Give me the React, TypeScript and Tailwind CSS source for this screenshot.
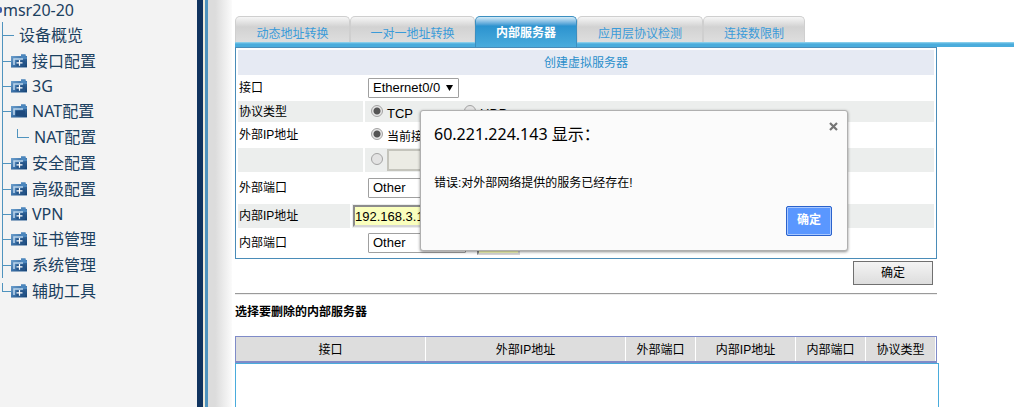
import { useState } from "react";
import type { ReactNode } from "react";

type NodeKind = "leaf" | "closed" | "open" | "child" | "last";

const tree: { label: string; kind: NodeKind; short?: boolean }[] = [
  { label: "设备概览", kind: "leaf" },
  { label: "接口配置", kind: "closed" },
  { label: "3G", kind: "closed", short: true },
  { label: "NAT配置", kind: "open" },
  { label: "NAT配置", kind: "child" },
  { label: "安全配置", kind: "closed" },
  { label: "高级配置", kind: "closed" },
  { label: "VPN", kind: "closed", short: true },
  { label: "证书管理", kind: "closed" },
  { label: "系统管理", kind: "closed" },
  { label: "辅助工具", kind: "last" },
];

const tabs = [
  { label: "动态地址转换", width: "w-[115px]" },
  { label: "一对一地址转换", width: "w-[125px]" },
  { label: "内部服务器", width: "w-[102px]" },
  { label: "应用层协议检测", width: "w-[126px]" },
  { label: "连接数限制", width: "w-[102px]" },
];

const columns = [
  { label: "接口", width: "w-[190px]" },
  { label: "外部IP地址", width: "w-[200px]" },
  { label: "外部端口", width: "w-[70px]" },
  { label: "内部IP地址", width: "w-[100px]" },
  { label: "内部端口", width: "w-[70px]" },
  { label: "协议类型", width: "w-[70px]" },
];

function FolderIcon({ open }: { open: boolean }) {
  return (
    <svg width="16" height="14" viewBox="0 0 16 14" className="shrink-0" aria-hidden="true">
      <defs>
        <linearGradient id="folder" x1="0" y1="0" x2="1" y2="1">
          <stop offset="0" stopColor="#74a6d2" />
          <stop offset="0.5" stopColor="#3b71a8" />
          <stop offset="1" stopColor="#123c6c" />
        </linearGradient>
      </defs>
      <path d="M0 2H10V0.5H14.5V2H16V14H0Z" fill="url(#folder)" />
      <path d="M10 0.5H14.5V2.5H16V5H10Z" fill="#4b86bd" />
      <path d="M0 13H16V14H0Z" fill="#8fa9c4" />
      <path d="M3 11V5H12" fill="none" stroke="#b9d3ea" strokeWidth="1.6" />
      {open ? (
        <path d="M4.5 6.5H14V12H4.5Z" fill="#1d4a7e" />
      ) : (
        <>
          <path d="M5.5 6.5H14V12H5.5Z" fill="#245489" />
          <path d="M5.5 8.8H11.5M8.5 6V11.8" stroke="#ffffff" strokeWidth="1.2" />
        </>
      )}
    </svg>
  );
}

function Branch({ kind }: { kind: NodeKind }) {
  if (kind === "last") {
    return (
      <span className="ml-[2px] flex w-[9px] shrink-0 flex-col self-stretch pt-[5px]">
        <span className="h-[9px] border-b border-l border-[#4f93be]" />
      </span>
    );
  }
  if (kind === "child") {
    return (
      <>
        <span className="ml-[2px] w-[15px] shrink-0 self-stretch border-l border-[#4f93be]" />
        <span className="mr-[5px] flex w-[12px] shrink-0 flex-col self-stretch pt-[5px]">
          <span className="h-[9px] border-b border-l border-[#4f93be]" />
        </span>
      </>
    );
  }
  const width = kind === "leaf" ? "w-[12px] mr-[5px]" : "w-[9px]";
  return (
    <span className={`ml-[2px] flex shrink-0 items-center self-stretch border-l border-[#4f93be] ${width}`}>
      <span className="h-px w-full bg-[#4f93be]" />
    </span>
  );
}

function Sidebar() {
  return (
    <nav className="w-[197px] shrink-0 overflow-hidden bg-[#f3f3f3] font-['Noto_Sans','Noto_Sans_CJK_SC',sans-serif] text-[16px] text-[#1b4060]">
      <div className="flex h-[22px] items-center pb-[2px]">
        <span className="h-[6px] w-[2px] rounded-r-full bg-[#3a5fb0]" />
        <span className="ml-px leading-[20px]">msr20-20</span>
      </div>
      <ul>
        {tree.map((n, i) => (
          <li key={i}>
            <a href="#" className={`flex items-center whitespace-nowrap ${n.short ? "h-[24px]" : "h-[26px]"}`}>
              <Branch kind={n.kind} />
              {n.kind !== "leaf" && n.kind !== "child" && (
                <span className="mr-[5px] pb-px">
                  <FolderIcon open={n.kind === "open"} />
                </span>
              )}
              <span className="leading-[24px]">{n.label}</span>
            </a>
          </li>
        ))}
      </ul>
    </nav>
  );
}

function Row({ label, height, shaded, children, htmlFor, wide }: {
  label: string;
  height: string;
  shaded?: boolean;
  children: ReactNode;
  htmlFor?: string;
  wide?: boolean;
}) {
  const bg = shaded ? "bg-[#eceeed]" : "";
  return (
    <div className={`flex gap-[2px] ${height}`}>
      <div className={`flex shrink-0 items-center pl-px ${bg} ${wide ? "w-[112px]" : "w-[125px]"}`}>
        <label htmlFor={htmlFor}>{label}</label>
      </div>
      <div className={`flex min-w-0 flex-1 items-center ${bg} ${wide ? "pl-px" : "pl-[3px]"}`}>{children}</div>
    </div>
  );
}

function Select({ id, options, width }: { id: string; options: string[]; width: string }) {
  return (
    <span className={`relative flex ${width}`}>
      <select
        id={id}
        className="h-[20px] w-full appearance-none rounded-[1px] border border-[#a0a0a0] bg-white pl-[4px] font-['Liberation_Sans',sans-serif] text-[13px] leading-[18px] text-black"
      >
        {options.map((o) => (
          <option key={o}>{o}</option>
        ))}
      </select>
      <svg width="7" height="6" viewBox="0 0 7 6" className="pointer-events-none absolute top-[7px] right-[6px]" aria-hidden="true">
        <path d="M0 0H7L3.5 6Z" fill="#000" />
      </svg>
    </span>
  );
}

function Radio({ name, label, checked }: { name: string; label: string; checked?: boolean }) {
  return (
    <label className="flex items-center">
      <input
        type="radio"
        name={name}
        aria-label={label || "指定地址"}
        defaultChecked={checked}
        className="mx-[3px] mb-[2px] h-[12px] w-[12px] appearance-none rounded-full border border-[#a3a3a3] bg-[#e3e3e3] checked:bg-[radial-gradient(circle,#555_0,#555_3px,#e6e6e6_4px)]"
      />
      {label && <span className="ml-px pt-[4px] leading-[16px]">{label}</span>}
    </label>
  );
}

function Form() {
  return (
    <form className="border border-[#4a8cb8] p-[2px] pb-0 text-[12px] text-black" onSubmit={(e) => e.preventDefault()}>
      <h1 className="flex h-[25px] items-center justify-center bg-[#e6eaf3] text-[#2b8fcb]">创建虚拟服务器</h1>
      <Row label="接口" height="h-[26px]" htmlFor="iface">
        <Select id="iface" options={["Ethernet0/0"]} width="w-[91px]" />
      </Row>
      <Row label="协议类型" height="h-[21px]" shaded>
        <span className="flex gap-[48px] font-['Liberation_Sans','Noto_Sans_CJK_SC',sans-serif] text-[13px]">
          <Radio name="proto" label="TCP" checked />
          <Radio name="proto" label="UDP" />
        </span>
      </Row>
      <Row label="外部IP地址" height="h-[26px]">
        <Radio name="addr" label="当前接口" checked />
      </Row>
      <Row label="" height="h-[24px]" shaded>
        <Radio name="addr" label="" />
        <input disabled aria-label="外部IP地址" className="ml-px h-[22px] w-[150px] border-2 border-[#c4c4bc] bg-[#ebebe4]" />
      </Row>
      <Row label="外部端口" height="h-[32px]" htmlFor="outer-port">
        <Select id="outer-port" options={["Other"]} width="w-[98px]" />
      </Row>
      <Row label="内部IP地址" height="h-[24px]" shaded htmlFor="inner-ip" wide>
        <input
          id="inner-ip"
          defaultValue="192.168.3.1"
          className="h-[22px] w-[150px] border-2 border-[#d6d6d6] border-t-[#8c8c8c] border-l-[#8c8c8c] bg-[#faffbd] font-['Liberation_Sans',sans-serif] text-[13px]"
        />
      </Row>
      <Row label="内部端口" height="h-[30px]" htmlFor="inner-port">
        <Select id="inner-port" options={["Other"]} width="w-[98px]" />
        <input
          aria-label="内部端口号"
          className="ml-[11px] h-[24px] w-[43px] border-2 border-[#d6d6d6] border-t-[#8c8c8c] border-l-[#8c8c8c] bg-[#faffbd]"
        />
      </Row>
    </form>
  );
}

function Dialog({ onClose }: { onClose: () => void }) {
  return (
    <div
      role="alertdialog"
      aria-labelledby="dialog-title"
      className="absolute top-[110px] left-[420px] flex w-[428px] flex-col rounded-[3px] border border-[#b0b0b0] bg-[#fbfbfb] px-[13px] pt-[11px] pb-[14px] shadow-[0_1px_3px_rgba(0,0,0,0.45)]"
    >
      <div className="flex items-start justify-between">
        <h2 id="dialog-title" className="font-['Noto_Sans','Noto_Sans_CJK_SC',sans-serif] text-[16px] leading-[24px] text-black">
          60.221.224.143 显示：
        </h2>
        <button type="button" aria-label="关闭" onClick={onClose} className="-mr-[4px]">
          <svg width="9" height="9" viewBox="0 0 9 9" aria-hidden="true">
            <path d="M1 1L8 8M8 1L1 8" stroke="#757575" strokeWidth="2.2" />
          </svg>
        </button>
      </div>
      <p className="mt-[29px] text-[12px] leading-[16px] text-black">错误:对外部网络提供的服务已经存在!</p>
      <button
        type="button"
        onClick={onClose}
        className="mt-[15px] mr-[2px] h-[30px] w-[46px] self-end rounded-[2px] border border-[#2a62cc] bg-[#5a97ff] pb-[2px] text-[12px] leading-[16px] font-bold text-white shadow-[inset_0_0_0_1px_#a9c8ff]"
      >
        确定
      </button>
    </div>
  );
}

export default function App() {
  const [active, setActive] = useState(2);
  const [open, setOpen] = useState(true);
  return (
    <div className="relative flex min-h-screen bg-white font-['Liberation_Sans','Noto_Sans_CJK_SC',sans-serif]">
      <Sidebar />
      <div className="w-[6px] shrink-0 bg-[#10335f]" />
      <div className="w-[2px] shrink-0 bg-[#ece9d8]" />
      <div className="w-[3px] shrink-0 bg-[#4f93be]" />
      <div className="w-[24px] shrink-0 bg-linear-to-r from-[#dcdcdc] from-30% to-[#fbfbfb]" />
      <main className="flex min-w-0 flex-1 flex-col pt-[16px] pl-[3px]">
        <div className="flex h-[31px] bg-[linear-gradient(#9bd8ef,#4aacdc_2px,#4aacdc)] bg-[length:100%_5px] bg-bottom bg-no-repeat">
          {tabs.map((t, i) => (
            <button
              key={t.label}
              type="button"
              onClick={() => setActive(i)}
              className={`shrink-0 rounded-t-[5px] border border-b-0 text-[12px] leading-[16px] whitespace-nowrap ${t.width} ${
                i === active
                  ? "h-[31px] border-[#3c8fc0] bg-linear-to-b from-[#d5ecf8] via-[#2b93cf] via-30% to-[#4aacdc] pt-[2px] font-bold text-white"
                  : "h-[26px] border-[#cfcfcf] bg-linear-to-b from-[#f6f6f6] via-[#d2d2d2] via-40% to-[#dedede] pt-[8px] text-[#3a9bd9]"
              }`}
            >
              {t.label}
            </button>
          ))}
        </div>
        <div className="mr-[77px]">
          <Form />
          <div className="flex justify-end pt-[2px] pr-[4px]">
            <button
              type="button"
              className="h-[24px] w-[80px] border border-[#707070] bg-linear-to-b from-[#f4f4f4] to-[#dddddd] text-[12px] leading-[16px] text-black"
            >
              确定
            </button>
          </div>
          <hr className="mt-[8px] h-[2px] border-0 border-t border-[#9a9a9a] bg-[#eeeeee]" />
          <h2 className="pt-[8px] text-[12px] leading-[18px] font-bold text-black">选择要删除的内部服务器</h2>
          <table className="mt-[15px] w-full table-fixed border-separate border-spacing-0 border border-b-2 border-[#7f8bc8] bg-[#dddddd] text-[12px] text-black">
            <thead>
              <tr>
                {columns.map((c) => (
                  <th key={c.label} className={`h-[24px] border-r border-white p-0 pt-[2px] leading-[18px] font-normal ${c.width}`}>
                    {c.label}
                  </th>
                ))}
              </tr>
            </thead>
          </table>
        </div>
        <div className="mr-[75px] flex-1 border border-b-0 border-[#4aacdc]" />
      </main>
      {open && <Dialog onClose={() => setOpen(false)} />}
    </div>
  );
}
